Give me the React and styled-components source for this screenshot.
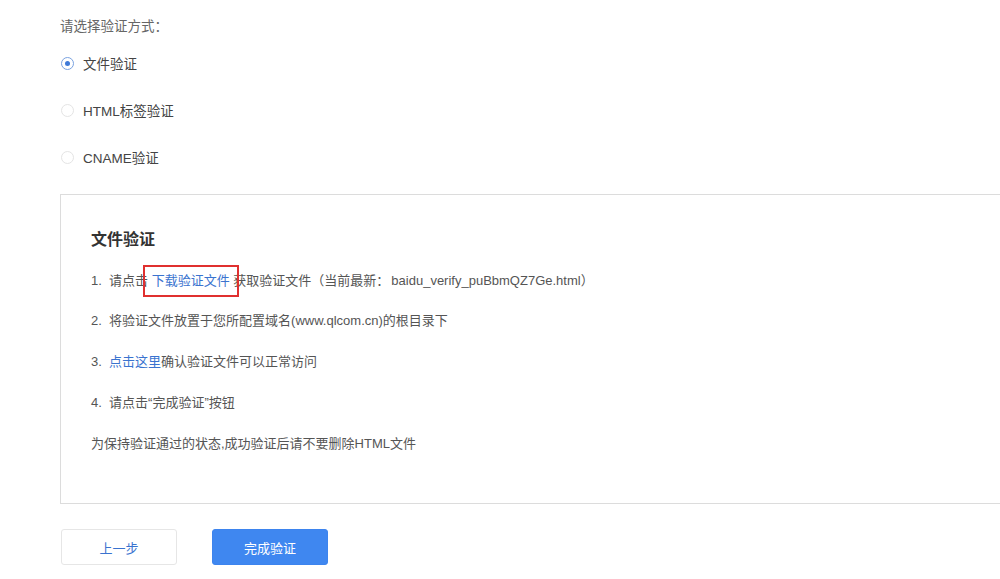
import React from "react";
import styled, { createGlobalStyle } from "styled-components";

const Global = createGlobalStyle`
  html, body { margin: 0; padding: 0; background: #fff; }
  body { font-family: "Liberation Sans", "Noto Sans CJK SC", sans-serif; overflow: hidden; }
`;

const Page = styled.div`
  width: 1000px;
  height: 579px;
  padding: 16px 0 0 60px;
  box-sizing: border-box;
  color: #555;
  font-size: 13px;
`;

const Prompt = styled.div`
  color: #666;
  line-height: 18px;
  height: 18px;
  font-size: 13.5px;
`;

const WideColon = styled.span`
  font-family: "Noto Sans CJK SC", sans-serif;
  letter-spacing: 2px;
`;

const RadioList = styled.div`
  display: flex;
  flex-direction: column;
  gap: 29px;
  margin-top: 20px;
`;

const RadioRow = styled.label`
  display: flex;
  align-items: center;
  gap: 9px;
  height: 18px;
  font-size: 13.5px;
  color: #444;
`;

const RadioDot = styled.span`
  width: 13px;
  height: 13px;
  box-sizing: border-box;
  border-radius: 50%;
  border: 1px solid ${(p) => (p.$checked ? "#7aa2e0" : "#e4e4e4")};
  background: #fff;
  display: flex;
  align-items: center;
  justify-content: center;
  margin-left: 1px;
  &::after {
    content: "";
    width: 5px;
    height: 5px;
    border-radius: 50%;
    background: ${(p) => (p.$checked ? "#3f7ad8" : "transparent")};
  }
`;

const Panel = styled.div`
  margin-top: 28px;
  height: 310px;
  border: 1px solid #dcdcdc;
  border-right: none;
  box-sizing: border-box;
  padding: 34px 0 0 30px;
`;

const PanelTitle = styled.div`
  font-size: 16px;
  font-weight: bold;
  color: #333;
  line-height: 22px;
  height: 22px;
`;

const Steps = styled.div`
  display: flex;
  flex-direction: column;
  gap: 23px;
  margin-top: 20px;
`;

const Step = styled.div`
  line-height: 18px;
  height: 18px;
  white-space: nowrap;
`;

const Link = styled.a`
  color: #3a73cf;
  text-decoration: none;
  position: relative;
`;

const Highlight = styled.span`
  position: absolute;
  left: -9px;
  right: -9px;
  top: -8px;
  bottom: -9px;
  border: 2px solid #e0302f;
  pointer-events: none;
`;

const Actions = styled.div`
  display: flex;
  gap: 35px;
  margin-top: 25px;
  padding-left: 1px;
`;

const Button = styled.button`
  width: 116px;
  height: 36px;
  box-sizing: border-box;
  border-radius: 3px;
  font-family: inherit;
  font-size: 13px;
  cursor: pointer;
  border: 1px solid ${(p) => (p.$primary ? "#3d84ee" : "#e6e6e6")};
  background: ${(p) => (p.$primary ? "#3f87f0" : "#fff")};
  color: ${(p) => (p.$primary ? "#fff" : "#3a73cf")};
`;

export default function App() {
  return (
    <>
      <Global />
      <Page>
        <Prompt>
          请选择验证方式<WideColon>：</WideColon>
        </Prompt>
        <RadioList>
          <RadioRow>
            <RadioDot $checked />
            文件验证
          </RadioRow>
          <RadioRow>
            <RadioDot />
            HTML标签验证
          </RadioRow>
          <RadioRow>
            <RadioDot />
            CNAME验证
          </RadioRow>
        </RadioList>
        <Panel>
          <PanelTitle>文件验证</PanelTitle>
          <Steps>
            <Step>
              1.&nbsp;&nbsp;请点击&nbsp;
              <Link href="#">
                下载验证文件
                <Highlight />
              </Link>
              &nbsp;获取验证文件（当前最新<WideColon>：</WideColon>baidu_verify_puBbmQZ7Ge.html）
            </Step>
            <Step>2.&nbsp;&nbsp;将验证文件放置于您所配置域名(www.qlcom.cn)的根目录下</Step>
            <Step>
              3.&nbsp;&nbsp;<Link href="#">点击这里</Link>确认验证文件可以正常访问
            </Step>
            <Step>4.&nbsp;&nbsp;请点击“完成验证”按钮</Step>
            <Step>为保持验证通过的状态,成功验证后请不要删除HTML文件</Step>
          </Steps>
        </Panel>
        <Actions>
          <Button>上一步</Button>
          <Button $primary>完成验证</Button>
        </Actions>
      </Page>
    </>
  );
}
